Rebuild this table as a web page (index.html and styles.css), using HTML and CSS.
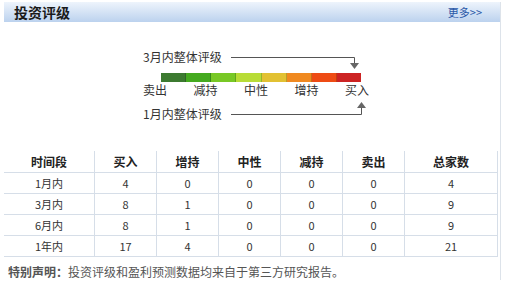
FILE: index.html
```html
<!DOCTYPE html>
<html lang="zh-CN">
<head>
<meta charset="utf-8">
<title>投资评级</title>
<link rel="stylesheet" href="styles.css">
</head>
<body>
<div class="panel">
  <div class="head">
    <span class="title">投资评级</span>
    <a class="more" href="#">更多&gt;&gt;</a>
  </div>
  <div class="diagram">
    <div class="row-top">
      <span class="cap">3月内整体评级</span>
      <svg width="140" height="24" viewBox="0 0 140 24">
        <path d="M5 8.5H128.5V17" fill="none" stroke="#555" stroke-width="1"/>
        <polygon points="124,14 133,14 128.5,20" fill="#666"/>
      </svg>
    </div>
    <div class="bar">
      <span class="s1"></span><span class="s2"></span><span class="s3"></span><span class="s4"></span><span class="s5"></span><span class="s6"></span><span class="s7"></span><span class="s8"></span>
    </div>
    <div class="labels">
      <span>卖出</span><span>减持</span><span>中性</span><span>增持</span><span>买入</span>
    </div>
    <div class="row-bottom">
      <span class="cap">1月内整体评级</span>
      <svg width="140" height="22" viewBox="0 0 140 22">
        <path d="M5 14.5H135.5V6" fill="none" stroke="#555" stroke-width="1"/>
        <polygon points="131,8 140,8 135.5,2" fill="#666"/>
      </svg>
    </div>
  </div>
  <table class="grid">
    <thead>
      <tr><th>时间段</th><th>买入</th><th>增持</th><th>中性</th><th>减持</th><th>卖出</th><th>总家数</th></tr>
    </thead>
    <tbody>
      <tr><td>1月内</td><td>4</td><td>0</td><td>0</td><td>0</td><td>0</td><td>4</td></tr>
      <tr><td>3月内</td><td>8</td><td>1</td><td>0</td><td>0</td><td>0</td><td>9</td></tr>
      <tr><td>6月内</td><td>8</td><td>1</td><td>0</td><td>0</td><td>0</td><td>9</td></tr>
      <tr><td>1年内</td><td>17</td><td>4</td><td>0</td><td>0</td><td>0</td><td>21</td></tr>
    </tbody>
  </table>
  <p class="note"><b>特别声明：</b>投资评级和盈利预测数据均来自于第三方研究报告。</p>
</div>
</body>
</html>
```
FILE: styles.css
```css
html, body {
  margin: 0;
  padding: 0;
  background: #fff;
}
body {
  font-family: "Noto Sans CJK SC", "DejaVu Sans", sans-serif;
  font-size: 12px;
  color: #333;
}
.panel {
  width: 496px;
  margin: 2px 0 0 4px;
  border-right: 1px solid #dde3ea;
}
.head {
  height: 20px;
  display: flex;
  align-items: center;
  justify-content: space-between;
  background: linear-gradient(#eef4fc, #bcd2ee);
  padding: 0 18px 0 10px;
}
.title {
  font-size: 14px;
  font-weight: bold;
  color: #1a1a1a;
  line-height: 20px;
}
.more {
  font-size: 11px;
  color: #2a58a8;
  text-decoration: none;
  line-height: 20px;
}
.diagram {
  padding: 27px 0 0 139px;
  color: #333;
}
.cap {
  font-size: 12px;
  line-height: 16px;
  width: 83px;
  white-space: nowrap;
}
.row-top {
  display: flex;
  align-items: flex-start;
  height: 24px;
}
.row-bottom {
  display: flex;
  align-items: flex-end;
  height: 24px;
}
.bar {
  display: flex;
  width: 200px;
  height: 9px;
  margin-left: 18px;
}
.bar span {
  flex: 1;
  border-right: 1px solid rgba(0,0,0,0.18);
}
.bar span:last-child { border-right: 0; }
.s1 { background: #3c7a30; }
.s2 { background: #45aa1f; }
.s3 { background: #78c825; }
.s4 { background: #b8dc36; }
.s5 { background: #e2c132; }
.s6 { background: #f0891f; }
.s7 { background: #ee4b14; }
.s8 { background: #cc2323; }
.labels {
  display: flex;
  justify-content: space-between;
  width: 226px;
  height: 16px;
  line-height: 16px;
  font-size: 12px;
}
.grid {
  margin-top: 29px;
  width: 494px;
  border-collapse: collapse;
  text-align: center;
}
.grid th, .grid td {
  border: 1px solid #d6dee8;
  padding: 0;
}
.grid tr:first-child th { border-top: 0; }
.grid th:first-child, .grid td:first-child { border-left: 0; }
.grid th {
  height: 21px;
  font-size: 12px;
  font-weight: bold;
  color: #222;
}
.grid td {
  height: 20px;
  font-size: 11px;
  color: #333;
}
.grid th:first-child { width: 90px; }
.grid th:last-child { width: 92px; }
.note {
  margin: 7px 0 0 4px;
  font-size: 12px;
  color: #555;
  line-height: 16px;
}
.note b {
  color: #555;
}
```
